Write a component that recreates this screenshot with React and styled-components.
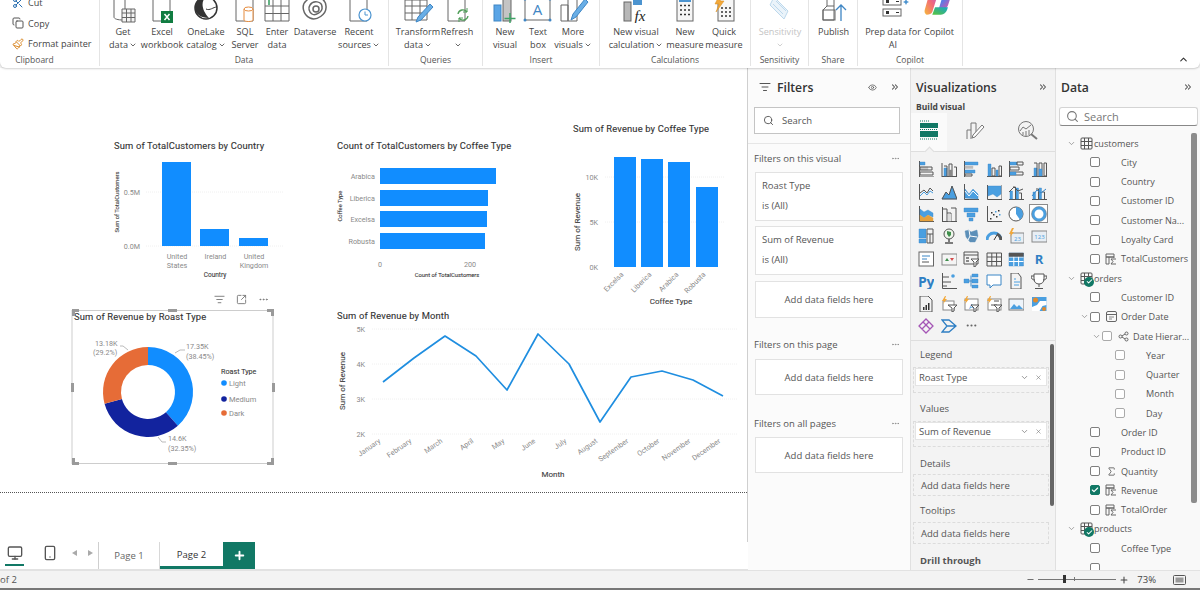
import React from "react";
import styled, { createGlobalStyle } from "styled-components";
import { Scissors, Copy, Paintbrush, Search, ChevronDown, ChevronsRight, ChevronUp, X, Monitor, Smartphone, Plus, Minus, Eye, Sigma, ListFilter, Ellipsis, SquareArrowOutUpRight, Check } from "lucide-react";

const FONT = '"Open Sans", "Noto Sans", sans-serif';
const CHART = 'Roboto, "Liberation Sans", sans-serif';
const GREEN = "#117865";
const BLUE = "#118DFF";

const Global = createGlobalStyle`
  html, body { margin: 0; padding: 0; background: #fff; }
  body { font-family: ${FONT}; color: #444; }
`;
const Root = styled.div`
  width: 1200px; height: 590px; display: flex; flex-direction: column; overflow: hidden; background: #f3f3f3;
`;

/* ---------- Ribbon ---------- */
const RibbonBar = styled.header`
  height: 68px; flex: none; display: flex; background: #fff; overflow: hidden;
  border-radius: 0 0 6px 6px; box-shadow: 0 1px 2px rgba(0,0,0,.18); position: relative; z-index: 2;
`;
const Group = styled.section`
  width: ${p => p.$w}px; flex: none; box-sizing: border-box; height: 66px;
  display: flex; flex-direction: column; border-right: 1px solid #e4e4e4;
`;
const GroupRow = styled.div`
  height: 54px; display: flex; padding-left: ${p => p.$pad || 0}px;
`;
const GroupLabel = styled.div`
  font-size: 8.5px; line-height: 12px; text-align: center; color: #555; padding-right: ${p => p.$shift || 0}px;
`;
const RButton = styled.div`
  width: ${p => p.$w}px; flex: none; display: flex; flex-direction: column; align-items: center;
`;
const RIcon = styled.div`
  height: 23px; width: 32px; display: flex; align-items: flex-end; justify-content: center;
  svg { flex: none; }
`;
const RLabel = styled.div`
  font-size: 9.1px; line-height: 13px; padding-top: 1.5px; text-align: center; white-space: nowrap;
  color: ${p => (p.$off ? "#c4c4c4" : "#444")};
`;
const Caret = styled(ChevronDown)`
  width: 8px; height: 8px; margin-left: 1px; vertical-align: -1px; stroke-width: 2.4;
`;
const ClipRows = styled.div`
  display: flex; flex-direction: column; padding-left: 12px; margin-top: -4px; gap: 7px;
`;
const ClipRow = styled.div`
  display: flex; align-items: center; gap: 4px; font-size: 9.1px; line-height: 13px; height: 13.5px; color: #444; white-space: nowrap;
  svg { width: 12px; height: 12px; color: #555; flex: none; }
`;
const Collapse = styled.div`
  margin-left: auto; align-self: flex-end; padding: 0 11px 3px 0; color: #333; line-height: 0;
`;

const S = "#666";
const Doc = () => <path d="M7 -2h11l6 7v25H7z" fill="#fff" stroke={S} />;
const I = {
  get: <><path d="M7 4v22c0 2 4 3 9 3h2V4" fill="#fff" stroke={S} /><ellipse cx="13" cy="4" rx="6" ry="3" fill="#fff" stroke={S} /><path d="M15 18h13v13H15zM15 22h13M15 26.500h13M19.500 18v13M24 18v13" fill="#f3f3f3" stroke={S} /></>,
  excel: <><Doc /><rect x="15" y="20" width="12" height="12" fill="#107c41" /><path d="M18.500 23l5 6M23.500 23l-5 6" stroke="#fff" strokeWidth="1.500" /></>,
  lake: <><circle cx="16" cy="17" r="11" fill="#fff" stroke="#333" strokeWidth="1.500" /><path d="M5 17c0-6 5-11 11-11-5 4-5 12 3 21-8 0-14-4-14-10z" fill="#333" /><path d="M16 18c4 2 7-2 11-2" stroke="#333" fill="none" /></>,
  sql: <><Doc /><path d="M15 18v11c0 2 9 2 9 0V18" fill="#fff" stroke="#e58a3c" /><ellipse cx="19.500" cy="18" rx="4.500" ry="2" fill="#fff" stroke="#e58a3c" /></>,
  enter: <><path d="M4 7h24v23H4zM4 15h24M4 22.500h24M12 7v23M20 7v23" fill="#fff" stroke={S} /><path d="M8 2v12M2 8h12" stroke="#3fa266" strokeWidth="1.600" /></>,
  dv: <><path d="M7 10c6-7 19-5 20 5 1 9-10 15-16 12C4 24 2 14 7 10z" fill="none" stroke={S} strokeWidth="1.500" /><path d="M11 14c3-5 12-4 12 2 1 5-7 9-10 7-3-2-4-6-2-9z" fill="none" stroke={S} strokeWidth="1.500" /><circle cx="17" cy="18" r="3" fill="none" stroke={S} strokeWidth="1.500" /></>,
  recent: <><Doc /><circle cx="22" cy="24" r="6" fill="#fff" stroke="#4c94d0" strokeWidth="1.200" /><path d="M22 20.500V24h3" fill="none" stroke="#4c94d0" /></>,
  transform: <><path d="M3 9h22v20H3zM3 15h22M3 22h22M10 9v20M18 9v20" fill="#fff" stroke={S} /><path d="M28 13l3 3-12 13-5 2 2-5z" fill="#69aee6" stroke="#3f86c4" /></>,
  refresh: <><Doc /><path d="M17 23a5 5 0 0 1 9-2M27 25a5 5 0 0 1-9 2" fill="none" stroke="#4f9e58" strokeWidth="1.300" /><path d="M26 17v4h-4M18 31v-4h4" fill="none" stroke="#4f9e58" /></>,
  newv: <><rect x="5" y="14" width="7" height="16" fill="#5aa5e6" stroke="#3f86c4" /><rect x="14" y="2" width="8" height="28" fill="#c4c4c4" stroke={S} /><path d="M21 22v11M15.500 27.500h11" stroke="#3fa266" strokeWidth="1.500" /></>,
  textb: <><rect x="3" y="8" width="25" height="21" fill="#fff" stroke={S} /><circle cx="3" cy="8" r="1.500" fill="#3f86c4" /><circle cx="28" cy="8" r="1.500" fill="#3f86c4" /><circle cx="3" cy="29" r="1.500" fill="#3f86c4" /><circle cx="28" cy="29" r="1.500" fill="#3f86c4" /><text x="15.500" y="24" textAnchor="middle" fontSize="15" fontFamily={FONT} fill="#3f86c4">A</text></>,
  more: <><path d="M4 14h7v16H4zM11 6h9v24h-9z" fill="#fff" stroke={S} /><path d="M28 8l3 3-12 15-5 3 2-6z" fill="#69aee6" stroke="#3f86c4" /></>,
  calc: <><rect x="4" y="11" width="7" height="19" fill="#b8b8b8" stroke={S} /><rect x="13" y="2" width="9" height="12" fill="#4c94d0" /><text x="20" y="30" textAnchor="middle" fontSize="15" fontStyle="italic" fontFamily="Liberation Serif, serif" fill="#222">fx</text></>,
  measure: <><rect x="8" y="3" width="16" height="27" fill="#f6f6f6" stroke={S} /><rect x="10" y="5" width="12" height="6" fill="#4c94d0" /><path d="M11 14.500h2M15 14.500h2M19 14.500h2M11 19h2M15 19h2M19 19h2M11 23.500h2M15 23.500h2M19 23.500h2" stroke="#333" strokeWidth="1.600" /></>,
  quick: <><rect x="10" y="8" width="16" height="22" fill="#f6f6f6" stroke={S} /><path d="M13 17h2M17 17h2M21 17h2M13 21h2M17 21h2M21 21h2M13 25h2M17 25h2M21 25h2" stroke="#333" strokeWidth="1.600" /><path d="M13 1l-6 12h4l-3 8 8-11h-4l4-8z" fill="#f2a83a" stroke="#d88a16" strokeWidth=".5" /></>,
  sens: <><path d="M10 6l14 14-4 8L6 14z" fill="#eaf3fa" stroke="#bcd8ec" /><path d="M12 10l10 10M9 13l10 10" stroke="#bcd8ec" /></>,
  publish: <><path d="M5 19l4-4h7v14H5zM9 15V4h7v11" fill="#fff" stroke={S} /><rect x="5" y="19" width="12" height="10" fill="none" stroke={S} /><path d="M23 30V14M18 19l5-5 5 5" fill="none" stroke="#3f86c4" strokeWidth="1.300" /></>,
  prep: <g transform="translate(2 -3)"><rect x="4" y="10" width="18" height="7" fill="#fff" stroke={S} /><rect x="4" y="21" width="18" height="7" fill="#fff" stroke={S} /><rect x="7" y="12" width="3" height="3" fill="#333" /><rect x="7" y="23" width="3" height="3" fill="#333" /><path d="M17 13.500h3M17 24.500h3" stroke="#333" /><path d="M23 3l1.500 3 3 1.500-3 1.500-1.500 3-1.500-3-3-1.500 3-1.500z" fill="none" stroke="#4c94d0" /><path d="M27 11l1 2 2 1-2 1-1 2-1-2-2-1 2-1z" fill="#4c94d0" /></g>,
  copilot: <g transform="translate(1 -3) scale(.92)"><defs><linearGradient id="cpA" x1="0" y1="0" x2="1" y2="1"><stop offset="0" stopColor="#2b8cf0" /><stop offset=".55" stopColor="#5a7ae6" /><stop offset="1" stopColor="#f04f9a" /></linearGradient><linearGradient id="cpB" x1="0" y1="1" x2="1" y2="0"><stop offset="0" stopColor="#f6b83a" /><stop offset=".5" stopColor="#f2697a" /><stop offset="1" stopColor="#b45ae0" /></linearGradient><linearGradient id="cpC" x1="0" y1="1" x2="1" y2="0"><stop offset="0" stopColor="#5ac43c" /><stop offset="1" stopColor="#16a6c8" /></linearGradient></defs><path d="M10 2h14c4 0 6 4 5 8l-3 9c-1 3-4 4-7 4h-3l5-17c1-2-1-4-4-4z" fill="url(#cpA)" /><path d="M5 9c1-3 3-5 6-5h5L9 26c-1 2-3 3-6 3-2-1-3-3-2-6z" fill="url(#cpB)" /><path d="M9 29l3-8h14c-1 4-3 8-8 8z" fill="url(#cpC)" /></g>,
};
const RI = ({ n }) => <svg width="32" height="32" viewBox="0 0 32 32" fill="none" strokeWidth="1">{I[n]}</svg>;

const RB = ({ w, n, off, l1, l2, c }) => (
  <RButton $w={w}>
    <RIcon><RI n={n} /></RIcon>
    <RLabel $off={off}>{l1}{c === 1 && <Caret />}<br />{l2}{c === 2 && <Caret />}</RLabel>
  </RButton>
);

const Ribbon = () => (
  <RibbonBar>
    <Group $w={100}>
      <GroupRow>
        <ClipRows>
          <ClipRow><Scissors style={{ color: "#2a6fb0" }} />Cut</ClipRow>
          <ClipRow><Copy />Copy</ClipRow>
          <ClipRow><Paintbrush style={{ color: "#d98a2b" }} />Format painter</ClipRow>
        </ClipRows>
      </GroupRow>
      <GroupLabel $shift={30}>Clipboard</GroupLabel>
    </Group>
    <Group $w={289}>
      <GroupRow $pad={4}>
        <RB w={38} n="get" l1="Get" l2="data" c={2} />
        <RB w={40} n="excel" l1="Excel" l2="workbook" />
        <RB w={48} n="lake" l1="OneLake" l2="catalog" c={2} />
        <RB w={30} n="sql" l1="SQL" l2="Server" />
        <RB w={34} n="enter" l1="Enter" l2="data" />
        <RB w={42} n="dv" l1="Dataverse" l2="" />
        <RB w={46} n="recent" l1="Recent" l2="sources" c={2} />
      </GroupRow>
      <GroupLabel>Data</GroupLabel>
    </Group>
    <Group $w={94}>
      <GroupRow $pad={4}>
        <RB w={50} n="transform" l1="Transform" l2="data" c={2} />
        <RB w={28} n="refresh" l1="Refresh" l2="" c={2} />
      </GroupRow>
      <GroupLabel>Queries</GroupLabel>
    </Group>
    <Group $w={117}>
      <GroupRow $pad={5}>
        <RB w={34} n="newv" l1="New" l2="visual" />
        <RB w={32} n="textb" l1="Text" l2="box" />
        <RB w={38} n="more" l1="More" l2="visuals" c={2} />
      </GroupRow>
      <GroupLabel>Insert</GroupLabel>
    </Group>
    <Group $w={151}>
      <GroupRow $pad={4}>
        <RB w={64} n="calc" l1="New visual" l2="calculation" c={2} />
        <RB w={34} n="measure" l1="New" l2="measure" />
        <RB w={44} n="quick" l1="Quick" l2="measure" />
      </GroupRow>
      <GroupLabel>Calculations</GroupLabel>
    </Group>
    <Group $w={58}>
      <GroupRow $pad={0}>
        <RB w={58} n="sens" off l1="Sensitivity" l2="" c={2} />
      </GroupRow>
      <GroupLabel>Sensitivity</GroupLabel>
    </Group>
    <Group $w={49}>
      <GroupRow>
        <RB w={49} n="publish" l1="Publish" l2="" />
      </GroupRow>
      <GroupLabel>Share</GroupLabel>
    </Group>
    <Group $w={105}>
      <GroupRow $pad={5}>
        <RB w={60} n="prep" l1="Prep data for" l2="AI" />
        <RB w={32} n="copilot" l1="Copilot" l2="" />
      </GroupRow>
      <GroupLabel>Copilot</GroupLabel>
    </Group>
    <Collapse><ChevronUp size={11} strokeWidth={2.4} /></Collapse>
  </RibbonBar>
);

/* ---------- Canvas + charts ---------- */
const Body = styled.main`
  flex: 1; min-height: 0; display: flex;
`;
const CanvasCol = styled.div`
  width: 748px; flex: none; display: flex; flex-direction: column; background: #fff;
`;
const CanvasArea = styled.div`
  flex: 1; border-right: 1px solid #cfcfcf; min-height: 0;
`;
const Page = styled.div`
  height: 424px; position: relative; border-bottom: 1px dotted #555;
`;
const Visual = styled.svg`
  position: absolute; left: ${p => p.$x}px; top: ${p => p.$y - 68}px; overflow: visible;
`;
const Title = styled.text`
  font-family: ${CHART}; font-size: 9.4px; font-weight: 400; fill: #333; letter-spacing: .15px; stroke: #333; stroke-width: .12px;
`;
const Tick = styled.text`
  font-family: ${CHART}; font-size: 7.2px; fill: #8a8a8a; font-weight: 400;
`;
const AxisName = styled.text`
  font-family: ${CHART}; font-size: ${p => p.$s || 7}px; fill: #3c3c3c; font-weight: 400; stroke: #3c3c3c; stroke-width: .1px;
`;
const Grid = styled.line`
  stroke: #f0f0f0; stroke-width: 1; stroke-dasharray: 1 1;
`;
const Chart = ({ x, y, w, h, children }) => (
  <Visual $x={x} $y={y} width={w} height={h} viewBox={`${x} ${y} ${w} ${h}`}>{children}</Visual>
);

const CountryChart = () => (
  <Chart x={100} y={135} w={200} h={150}>
    <Title x={114} y={149}>Sum of TotalCustomers by Country</Title>
    <AxisName $s={5.8} transform="translate(119 202) rotate(-90)" textAnchor="middle">Sum of TotalCustomers</AxisName>
    <Grid x1={146} x2={283} y1={192} y2={192} /><Grid x1={146} x2={283} y1={246} y2={246} />
    <Tick x={140} y={194.500} textAnchor="end">0.5M</Tick>
    <Tick x={140} y={248.500} textAnchor="end">0.0M</Tick>
    <rect x={162} y={162} width={29} height={84} fill={BLUE} />
    <rect x={200} y={229} width={29} height={17} fill={BLUE} />
    <rect x={239} y={238} width={29} height={8} fill={BLUE} />
    <Tick x={177} y={259} textAnchor="middle">United</Tick><Tick x={177} y={268} textAnchor="middle">States</Tick>
    <Tick x={215.500} y={259} textAnchor="middle">Ireland</Tick>
    <Tick x={254} y={259} textAnchor="middle">United</Tick><Tick x={254} y={268} textAnchor="middle">Kingdom</Tick>
    <AxisName $s={6.5} x={215} y={277} textAnchor="middle">Country</AxisName>
  </Chart>
);

const TypeBarChart = () => (
  <Chart x={330} y={135} w={190} h={150}>
    <Title x={337} y={149}>Count of TotalCustomers by Coffee Type</Title>
    <AxisName $s={5.8} transform="translate(342 206) rotate(-90)" textAnchor="middle">Coffee Type</AxisName>
    {[["Arabica", 168, 116], ["Liberica", 190, 108], ["Excelsa", 211, 107], ["Robusta", 233, 105]].map(([n, y, w]) => (
      <g key={n}>
        <Tick x={375} y={y + 10.500} textAnchor="end">{n}</Tick>
        <rect x={380} y={y} width={w} height={16} fill={BLUE} />
      </g>
    ))}
    <Tick x={380} y={267} textAnchor="middle">0</Tick>
    <Tick x={470} y={267} textAnchor="middle">200</Tick>
    <AxisName $s={5.8} x={447} y={277} textAnchor="middle">Count of TotalCustomers</AxisName>
  </Chart>
);

const TypeColChart = () => (
  <Chart x={565} y={120} w={170} h={190}>
    <Title x={573} y={132}>Sum of Revenue by Coffee Type</Title>
    <AxisName $s={8} transform="translate(580 222) rotate(-90)" textAnchor="middle">Sum of Revenue</AxisName>
    <Grid x1={605} x2={725} y1={177} y2={177} /><Grid x1={605} x2={725} y1={222} y2={222} />
    <Tick x={598} y={180} textAnchor="end">10K</Tick>
    <Tick x={598} y={225} textAnchor="end">5K</Tick>
    <Tick x={598} y={270} textAnchor="end">0K</Tick>
    {[["Excelsa", 614, 157, 624], ["Liberica", 641, 159, 652], ["Arabica", 668, 162, 679], ["Robusta", 696, 187, 706]].map(([n, x, t, l]) => (
      <g key={n}>
        <rect x={x} y={t} width={22} height={267 - t} fill={BLUE} />
        <Tick transform={`translate(${l} 275) rotate(-45)`} textAnchor="end">{n}</Tick>
      </g>
    ))}
    <AxisName $s={8} x={671} y={304} textAnchor="middle">Coffee Type</AxisName>
  </Chart>
);

const polar = (cx, cy, r, f) => {
  const a = f * 2 * Math.PI - Math.PI / 2;
  return [cx + r * Math.cos(a), cy + r * Math.sin(a)];
};
const arc = (cx, cy, R, r, f0, f1) => {
  const [a, b] = polar(cx, cy, R, f0), [c, d] = polar(cx, cy, R, f1), [e, g] = polar(cx, cy, r, f1), [h, i] = polar(cx, cy, r, f0);
  const large = f1 - f0 > 0.5 ? 1 : 0;
  return `M${a} ${b}A${R} ${R} 0 ${large} 1 ${c} ${d}L${e} ${g}A${r} ${r} 0 ${large} 0 ${h} ${i}Z`;
};
const Handle = styled.rect`
  fill: #9a9a9a;
`;
const RoastChart = () => (
  <Chart x={68} y={306} w={212} h={162}>
    <rect x={72} y={310.500} width={201} height={153} fill="#fff" stroke="#cdcdcd" />
    <Title x={74} y={320}>Sum of Revenue by Roast Type</Title>
    <path d={arc(148, 392, 45, 27, 0, 0.3845)} fill={BLUE} />
    <path d={arc(148, 392, 45, 27, 0.3845, 0.708)} fill="#12239E" />
    <path d={arc(148, 392, 45, 27, 0.708, 1)} fill="#E66C37" />
    <path d="M175 353l5-3h5M158 437l4 5h4M128 350l-5-4h-3" fill="none" stroke="#bbb" />
    <Tick x={186} y={349}>17.35K</Tick><Tick x={186} y={358.500}>(38.45%)</Tick>
    <Tick x={168} y={441}>14.6K</Tick><Tick x={168} y={450.500}>(32.35%)</Tick>
    <Tick x={95} y={345.500}>13.18K</Tick><Tick x={93} y={355}>(29.2%)</Tick>
    <AxisName $s={7.2} x={221} y={374}>Roast Type</AxisName>
    {[["Light", BLUE, 383], ["Medium", "#12239E", 399], ["Dark", "#E66C37", 413]].map(([n, c, y]) => (
      <g key={n}>
        <circle cx={224} cy={y} r={2.800} fill={c} />
        <Tick x={229} y={y + 2.500} style={{ fontSize: 7.500 }}>{n}</Tick>
      </g>
    ))}
    <Handle x={72} y={309} width={7} height={3} /><Handle x={72} y={309} width={3} height={7} />
    <Handle x={267} y={309} width={7} height={3} /><Handle x={271} y={309} width={3} height={7} />
    <Handle x={72} y={462} width={7} height={3} /><Handle x={72} y={458} width={3} height={7} />
    <Handle x={267} y={462} width={7} height={3} /><Handle x={271} y={458} width={3} height={7} />
    <Handle x={168} y={309} width={9} height={3} /><Handle x={168} y={462} width={9} height={3} />
    <Handle x={71} y={383} width={3} height={9} /><Handle x={272} y={383} width={3} height={9} />
  </Chart>
);

const MONTHS = [["January", 383, 382], ["February", 414, 358], ["March", 445, 336], ["April", 476, 356], ["May", 507, 390], ["June", 538, 334], ["July", 569, 364], ["August", 600, 422], ["September", 631, 377], ["October", 662, 371], ["November", 693, 380], ["December", 723, 396]];
const LineChart = () => (
  <Chart x={330} y={306} w={415} h={180}>
    <Title x={337} y={319}>Sum of Revenue by Month</Title>
    <AxisName $s={8} transform="translate(345 381) rotate(-90)" textAnchor="middle">Sum of Revenue</AxisName>
    {[["5K", 329], ["4K", 364], ["3K", 399], ["2K", 434]].map(([t, y]) => (
      <g key={t}>
        <Grid x1={372} x2={737} y1={y} y2={y} />
        <Tick x={365} y={y + 2.500} textAnchor="end">{t}</Tick>
      </g>
    ))}
    <polyline points={MONTHS.map(m => `${m[1]},${m[2]}`).join(" ")} fill="none" stroke="#1f8ee0" strokeWidth="1.700" strokeLinejoin="round" />
    {MONTHS.map(([n, x]) => (
      <Tick key={n} transform={`translate(${x - 2} 442) rotate(-35)`} textAnchor="end">{n}</Tick>
    ))}
    <AxisName $s={8} x={553} y={477} textAnchor="middle">Month</AxisName>
  </Chart>
);

const VisualTools = styled.div`
  position: absolute; left: 214px; top: ${294 - 68}px; display: flex; gap: 11px; color: #777; align-items: center;
`;

/* ---------- Tabs ---------- */
const TabBar = styled.nav`
  height: 28px; flex: none; display: flex; align-items: stretch; border-bottom: 1px solid #e2e2e2; box-sizing: border-box; background: #fff;
`;
const ViewBtn = styled.div`
  width: ${p => p.$w}px; display: flex; justify-content: center; align-items: center; color: #555; position: relative;
  box-sizing: border-box; padding-bottom: 5px;
  ${p => p.$on && `&::after { content: ""; position: absolute; left: 5px; right: 5px; bottom: 3px; height: 2px; background: ${GREEN}; }`}
`;
const Arrows = styled.div`
  width: 28px; display: flex; align-items: center; justify-content: space-between; padding: 0 5px 5px 1px; box-sizing: border-box; border-right: 1px solid #cfcfcf;
`;
const Tri = styled.span`
  width: 0; height: 0; border: 3.500px solid transparent;
  ${p => (p.$left ? "border-right: 5px solid #aaa; border-left-width: 0;" : "border-left: 5px solid #aaa; border-right-width: 0;")}
`;
const PageTab = styled.div`
  width: ${p => p.$w}px; display: flex; align-items: center; justify-content: center; font-size: 9.5px; box-sizing: border-box;
  color: ${p => (p.$on ? "#333" : "#666")};
  border-right: ${p => (p.$on ? "0" : "1px solid #d8d8d8")};
  border-bottom: ${p => (p.$on ? `3px solid ${GREEN}` : "0")};
`;
const AddTab = styled.div`
  width: 32px; background: ${GREEN}; color: #fff; display: flex; align-items: center; justify-content: center;
`;

/* ---------- Panels ---------- */
const PanelHead = styled.div`
  height: 38px; display: flex; align-items: center; justify-content: space-between; padding: 0 ${p => p.$r || 8}px 0 ${p => p.$l || 6}px;
  svg { color: #555; }
`;
const PanelTitle = styled.h2`
  margin: 0; font-size: 12.200px; font-weight: 600; color: #333; display: flex; align-items: center; gap: 6px;
`;
const HeadIcons = styled.div`
  display: flex; align-items: center; gap: 13px;
`;
const FiltersPanel = styled.aside`
  width: 162px; flex: none; background: #fbfbfb; box-sizing: border-box; padding: 0 0 0 6px; overflow: hidden;
`;
const FilterSearch = styled.div`
  width: 146px; height: 27px; box-sizing: border-box; margin-top: 1px; background: #fff; border: 1px solid #c4c4c4;
  display: flex; align-items: center; gap: 8px; padding-left: 8px; font-size: 9.500px; color: #555;
`;
const Divider = styled.div`
  height: 1px; background: #e6e6e6; margin: 9px 0 0 -6px; width: 162px;
`;
const FilterSection = styled.div`
  display: flex; justify-content: space-between; align-items: center; height: 14px; font-size: 9.500px; color: #555; margin-top: ${p => p.$mt}px; padding-right: 10px;
  svg { color: #888; }
`;
const FilterCard = styled.div`
  width: 148px; margin: ${p => p.$mt}px 0 0 1px; box-sizing: border-box; background: #fff; border: 1px solid #e2e2e2;
  height: 49px; padding: 3px 0 0 6px; font-size: 9.500px; color: #555; line-height: 20px;
`;
const AddCard = styled.div`
  width: 148px; height: ${p => p.$h}px; margin: ${p => p.$mt}px 0 0 1px; box-sizing: border-box; background: #fff; border: 1px solid #e2e2e2;
  display: flex; align-items: center; justify-content: center; font-size: 9.500px; color: #555;
`;
const VizPanel = styled.aside`
  width: 145px; flex: none; box-sizing: border-box; background: #f3f3f3; border-left: 1px solid #e0e0e0; position: relative; overflow: hidden;
`;
const BuildLabel = styled.div`
  font-size: 8.500px; font-weight: 700; color: #444; margin: -5px 0 0 5px; line-height: 12px;
`;
const VizTabs = styled.div`
  height: 39px; display: grid; grid-template-columns: 36px 54px 54px; border-bottom: 1px solid #dedede; align-items: stretch; justify-items: stretch; box-sizing: border-box;
`;
const VizTab = styled.div`
  position: relative; display: flex; align-items: center; justify-content: center; padding-bottom: 4px;
  ${p => p.$on && `
    background: #fafafa;
    &::after {
      content: ""; position: absolute; left: 50%; bottom: -4px; width: 6px; height: 6px; margin-left: -3px;
      background: #f3f3f3; border-left: 1px solid #dedede; border-top: 1px solid #dedede; transform: rotate(45deg);
    }
  `}
`;
const VizGrid = styled.div`
  display: grid; grid-template-columns: repeat(6, 22.500px); grid-auto-rows: 22.400px; padding: 6px 0 0 4px; align-items: center; justify-items: center; height: 188px; box-sizing: border-box;
`;
const VizCell = styled.div`
  width: 19px; height: 19px; display: flex; align-items: center; justify-content: center; box-sizing: border-box;
  ${p => p.$on && "border: 1px solid #8a8a8a; background: #fff;"}
`;
const WellsBox = styled.div`
  border-top: 1px solid #dedede; padding: 0 0 0 2px;
`;
const WellLabel = styled.div`
  font-size: 9.500px; line-height: 14px; color: #555; margin: ${p => p.$mt}px 0 0 7px;
  font-weight: ${p => (p.$bold ? 700 : 400)};
`;
const Well = styled.div`
  width: 136px; height: ${p => p.$h}px; box-sizing: border-box; border: 1px dashed #dcdcdc; margin-top: ${p => p.$mt}px; padding: 0 1px;
  font-size: 9.500px; color: #555; display: flex; flex-direction: column; justify-content: ${p => (p.$add ? "center" : "flex-start")};
  ${p => p.$add && "padding-left: 7px;"}
`;
const Field = styled.div`
  height: 18px; background: #fff; border: 1px solid #e4e4e4; box-sizing: border-box; display: flex; align-items: center; padding: 0 4px 0 3px; color: #555;
  svg { color: #777; flex: none; }
  span { flex: 1; }
`;
const ScrollBar = styled.div`
  position: absolute; width: ${p => p.$w}px; left: ${p => p.$l}px; top: ${p => p.$t - 68}px; height: ${p => p.$h}px; background: ${p => p.$c}; border-radius: 2px;
`;
const DataPanel = styled.aside`
  width: 145px; flex: none; box-sizing: border-box; background: #f9f9f9; border-left: 1px solid #e0e0e0; position: relative; overflow: hidden;
`;
const DataSearch = styled.div`
  width: 139px; height: 19px; box-sizing: border-box; margin: 1px 0 7.400px 3px; background: #fff; border: 1px solid #d4d4d4; border-bottom: 1px solid #888; border-radius: 3px;
  display: flex; align-items: center; gap: 5px; padding-left: 6px; font-size: 11px; color: #777;
`;
const TreeRow = styled.div`
  height: 19.300px; display: flex; align-items: center; padding-left: ${p => p.$indent}px; font-size: 9.100px; color: #555; white-space: nowrap;
`;
const Chev = styled.span`
  width: 12px; flex: none; display: flex; justify-content: center; color: #888;
`;
const Box = styled.span`
  width: 10px; height: 10px; flex: none; box-sizing: border-box; border-radius: 2px; display: flex; align-items: center; justify-content: center; color: #fff;
  border: 1px solid ${p => (p.$on ? GREEN : p.$light ? "#aaa" : "#7f7f7f")}; background: ${p => (p.$on ? GREEN : "#fff")};
`;
const FieldIconSlot = styled.span`
  width: 16px; margin-left: 3px; margin-right: 2px; flex: none; display: flex; justify-content: center; color: #666;
`;
const TableSlot = styled.span`
  width: 14px; margin: 0 1px 0 2px; flex: none; position: relative; display: flex; justify-content: center;
`;
const Badge = styled.span`
  position: absolute; left: 5px; top: 5px; width: 10px; height: 10px; border-radius: 50%; background: ${GREEN}; color: #fff; display: flex; align-items: center; justify-content: center;
`;
const Status = styled.footer`
  height: 20px; flex: none; box-sizing: border-box; background: #f3f3f3; border-bottom: 2px solid #777; border-top: 1px solid #e2e2e2;
  display: flex; align-items: center; justify-content: space-between; font-size: 9.500px; color: #555; position: relative; z-index: 3;
`;
const ZoomTools = styled.div`
  display: flex; align-items: center; color: #444; padding-right: 14px;
`;
const ZoomValue = styled.span`
  margin: 0 17px 0 8px;
`;
const Slider = styled.div`
  width: 78px; height: 1px; background: #777; margin: 0 3px 0 3px; position: relative;
`;
const Thumb = styled.span`
  position: absolute; left: ${p => p.$l}px; top: ${p => -p.$h / 2}px; width: ${p => p.$w}px; height: ${p => p.$h}px; background: ${p => p.$c};
`;

const V = "#4a9fe0", Dk = "#555";
const P = ({ d, c = Dk, w = 1 }) => <path d={d} fill="none" stroke={c} strokeWidth={w} />;
const F = ({ d, c = V }) => <path d={d} fill={c} stroke={c === V ? "#3b86c6" : c} strokeWidth=".4" />;
const vizIcons = [
  <><P d="M1.500 0v16h15" /><F d="M2 1h5v3H2z" /><F d="M2 6h8v3H2z" c="#c6c6c6" /><P d="M2 6h12v3H2zM2 11h13v3H2z" /></>,
  <><P d="M1 15.500h15M1 2v14" /><F d="M3 7h3v8H3z" /><P d="M3 5h3v10M8 3h3v12H8zM13 6h2.500v9" /><F d="M8 9h3v6H8z" c="#888" /></>,
  <><P d="M1.500 0v16" /><F d="M2 1h13v3H2z" /><F d="M2 5h8v2.500H2z" c="#bbb" /><F d="M2 9h10v3H2z" /><P d="M2 13h7v2H2z" /></>,
  <><P d="M1 15.500h15" /><F d="M2 3h3v12H2z" /><P d="M6 7h3v8H6z" /><F d="M10 9h2v6h-2z" /><P d="M13 5h2.500v10H13z" /></>,
  <><P d="M1.500 0v16" /><F d="M2 1h7v3H2z" /><P d="M9 1h6v3H9zM2 6h9v3H2zM2 11h13v3H2z" /><F d="M2 11h6v3H2z" /></>,
  <><P d="M1 15.500h15" /><F d="M3 7h3v8H3z" /><P d="M3 2h3v13M8 2h3v13H8zM13 2h2.500v13H13z" /><F d="M8 8h3v7H8z" /></>,
  <><P d="M1.500 0v15.500H16" /><P d="M2 12l4-4 3 3 3-4 3 2" c="#4a9fe0" /><P d="M2 9l4-3 3 3 3-5 3 3" /></>,
  <><F d="M1 15l4-7 3 3 3-9 5 13z" /><P d="M1 15l4-7 3 3 3-9 5 13z" /></>,
  <><P d="M1.500 0v15.500H16" /><F d="M2 14V5l4 5 4-5 5 5v5z" /><P d="M2 7l4 5 4-5 5 5" c="#fff" /></>,
  <><P d="M1.500 1v14.500H16M16 1v14" /><F d="M2 2h13v8l-4 3-4-3-5 2z" /></>,
  <><P d="M1 15.500h15" /><F d="M2 7h2.500v8H2zM8 4h2.500v11H8z" /><P d="M5 3h2.500v12M11 9h2.500v6" /><P d="M1 8l5-5 4 4 5-2" /></>,
  <><P d="M1 15.500h15" /><F d="M2 8h2.500v7H2zM8 4h2.500v11H8z" /><P d="M5 5h2.500v10M11 8h2.500v7" /><P d="M1 12l5-6 4 3 5-4" c="#3b86c6" /></>,
  <><P d="M1.500 0v15.500H16" /><F d="M2 3l4 3 4-2 5 3v4l-5-2-4 3-4-3z" /><F d="M2 9l4 3 4-3 5 3v3H2z" c="#e6a13c" /></>,
  <><P d="M1 15.500h15M1.500 1v15" /><P d="M2 3h4v12M6 7h4v8M10 2h5v13" /><F d="M7 8h3v7H7z" c="#ddd" /></>,
  <><F d="M1 2h14v4H1z" /><F d="M4 7h8v4H4z" /><F d="M6 12h4v3H6z" /></>,
  <><P d="M1.500 0v15.500H16" /><path d="M4 12h1.500v1.500H4zM7 8h1.500v1.500H7zM10 10h1.500v1.500H10zM12 4h1.500v1.500H12zM5 6h1.500v1.500H5z" fill="#333" /><path d="M9 5h1.500v1.500H9zM13 8h1.500v1.500H13z" fill={V} /></>,
  <><circle cx="8" cy="8" r="7" fill="#fff" stroke={Dk} /><path d="M8 1a7 7 0 0 1 7 7H8z" fill={V} /><path d="M8 8h7a7 7 0 0 1-3 5.700z" fill={V} /></>,
  <><circle cx="8" cy="8" r="6" fill="none" stroke={V} strokeWidth="3" /><circle cx="8" cy="8" r="7.500" fill="none" stroke="#777" strokeWidth=".5" /></>,
  <><F d="M1 1h7v9H1z" /><F d="M1 11h7v4H1z" /><P d="M9 1h6v14H9zM9 6h6M12 6v9" /></>,
  <><circle cx="8" cy="6" r="5" fill="#eef5ea" stroke="#555" /><path d="M6 3l4 1 0 3-2 2-2-3z" fill="#3f8f4c" /><P d="M8 11v3M4 15h8" w="1.500" /></>,
  <><F d="M2 3l4-1 2 2 6-2 1 6-3 6-5 0-4-5z" c="#5c8fb8" /><P d="M6 2l1 6 7 1M7 8l-2 4" c="#fff" /></>,
  <><path d="M1 12a7 7 0 0 1 14 0" fill="none" stroke={V} strokeWidth="3" /><path d="M8 12l3-5" stroke="#333" /><path d="M11 6a7 7 0 0 1 4 6" fill="none" stroke={Dk} strokeWidth="3" /></>,
  <><rect x="3" y="5" width="13" height="10" fill="#e8eef4" stroke="#888" /><text x="9.500" y="13" textAnchor="middle" fontSize="6" fontFamily={FONT} fill={V}>23</text><path d="M4 0L1 6h2L2 9l4-5H4l2-4z" fill="#f2a83a" /></>,
  <><rect x="1" y="3" width="15" height="11" fill="#e8eef4" stroke="#888" /><text x="8.500" y="11" textAnchor="middle" fontSize="6" fontFamily={FONT} fill={V}>123</text></>,
  <><rect x="1" y="1" width="14.500" height="14" fill="#fff" stroke="#666" /><P d="M4 5h8M4 8h5" c="#3b86c6" /><P d="M4 11h7" /></>,
  <><rect x="1" y="3" width="15" height="11" fill="#f4f4f4" stroke="#888" /><path d="M4 10l2-3 2 3z" fill="#3f8f4c" /><path d="M9 7h4l-2 3z" fill="#d34a4a" /></>,
  <><P d="M1 1h14v12H1V1zM1 4h14" /><path d="M3 6h3v2H3zM3 9h3v2H3z" fill="#888" /><path d="M8 8h8l-3 3v4l-2 1v-5z" fill="#fff" stroke="#555" /></>,
  <><P d="M1 2h14.500v13H1zM1 6h14.500M1 10.500h14.500M5.800 2v13M10.600 2v13" /></>,
  <><F d="M1 2h14.500v13H1z" /><P d="M1 6h14.500M1 10.500h14.500M5.800 2v13M10.600 2v13" c="#fff" /><F d="M1 2h14.500v3.500H1z" c="#555" /></>,
  <text x="8" y="13" textAnchor="middle" fontSize="13" fontWeight="700" fontFamily={FONT} fill="#2f7fc4">R</text>,
  <text x="8" y="13.500" textAnchor="middle" fontSize="14" fontWeight="700" letterSpacing="-.5" fontFamily={FONT} fill="#2f7fc4">Py</text>,
  <><P d="M1.500 0v15.500H16M2 4h6M2 9h8M2 13h4" /><circle cx="12" cy="3" r="1.800" fill={V} /></>,
  <><F d="M1 6h5v4H1z" /><F d="M9 1h6v3H9zM9 6h6v4H9zM9 12h6v3H9z" /><P d="M6 8h3M8 2.500v11" c="#3b86c6" /></>,
  <path d="M1 2h14v10H7l-3 3v-3H1z" fill="#fff" stroke="#3b86c6" />,
  <><P d="M3 0h7l3 4v12H3z" /><P d="M6 6h2M6 9h6M6 12h5" c={V} /></>,
  <><path d="M3 1h10v5c0 3-2 5-5 5S3 9 3 6z" fill="#fff" stroke={Dk} /><P d="M3 3H0c0 3 2 4 4 4M13 3h3c0 3-2 4-4 4M8 11v3M4 15.500h8" /></>,
  <><P d="M2 0h8l4 4v12H2z" /><path d="M5 11h1.500v3H5zM7.500 9H9v5H7.500zM10 7h1.500v7H10z" fill="#333" /></>,
  <><rect x="2" y="5" width="11" height="9" fill="#fff" stroke="#888" /><path d="M4 0L1 5h2L2 8l4-5H4l1-3z" fill="#f2a83a" /><path d="M7 9h9l-3 3v3l-2 1v-4z" fill="#fff" stroke="#555" /></>,
  <><rect x="2" y="3" width="13" height="11" fill="#fff" stroke="#888" /><path d="M4 0L1 5h2L2 8l4-5H4l1-3z" fill="#f2a83a" /><text x="6" y="13" fontSize="8" fontFamily={FONT} fill={V}>A</text><path d="M8 9h8l-3 3v3l-2 1v-4z" fill="#fff" stroke="#555" /></>,
  <><rect x="2" y="3" width="13" height="11" fill="#fff" stroke="#888" /><path d="M4 0L1 5h2L2 8l4-5H4l1-3z" fill="#f2a83a" /><P d="M8 5h5M5 9h6" /><path d="M8 9h8l-3 3v3l-2 1v-4z" fill="#fff" stroke="#555" /></>,
  <><rect x="1" y="3" width="15" height="11" fill="#eef4fa" stroke="#777" /><path d="M2 13l4-5 3 3 2-2 4 4z" fill={V} /></>,
  <><path d="M1 1h14.500v14H1z" fill={V} /><path d="M1 11l5-2 3-4h6.500v4l-4 1-3 5H1z" fill="#fff" /><circle cx="4.500" cy="4" r="2.500" fill="#e28a2b" /><circle cx="13" cy="13" r="2" fill="#e28a2b" /></>,
  <path d="M8 1l7 7-7 7-7-7zM1 8l4-4 7 7M15 8l-4-4-7 7" fill="none" stroke="#a455b5" strokeWidth="1.300" />,
  <path d="M1 2h7l7 6-7 6H1l5-6zM6 8h9" fill="none" stroke="#2f7fc4" strokeWidth="1.300" />,
  <Ellipsis size={13} color="#666" />,
];

const TableIcon = () => (
  <svg width="13" height="13" viewBox="0 0 13 13"><path d="M2 1h9a1 1 0 0 1 1 1v9a1 1 0 0 1-1 1H2a1 1 0 0 1-1-1V2a1 1 0 0 1 1-1zM1 4.500h11M1 8.500h11M4.500 1v11M8.500 1v11" fill="none" stroke="#555" /></svg>
);
const MeasureIcon = () => (
  <svg width="12" height="12" viewBox="0 0 12 12"><path d="M1 1h8v3H1zM1 4h3v7H1zM4 4h5v1" fill="none" stroke="#666" /><path d="M11 6H6l2 2.500L6 11h5" fill="#f9f9f9" stroke="#666" /></svg>
);
const CalIcon = () => (
  <svg width="11" height="11" viewBox="0 0 11 11"><rect x=".5" y=".5" width="10" height="10" rx="1.500" fill="none" stroke="#666" /><path d="M.5 3.500h10" stroke="#666" /><path d="M3 6h5M3 8h3" stroke="#888" /></svg>
);
const HierIcon = () => (
  <svg width="11" height="11" viewBox="0 0 11 11" fill="none" stroke="#666"><circle cx="2.500" cy="5.500" r="1.500" /><circle cx="8.500" cy="2.500" r="1.500" /><circle cx="8.500" cy="8.500" r="1.500" /><path d="M4 5l3-2M4 6l3 2" /></svg>
);
const FitIcon = () => (
  <svg width="13" height="10" viewBox="0 0 13 10" fill="none" stroke="#555"><rect x=".5" y=".5" width="12" height="9" rx="1" /><rect x="2.500" y="2.500" width="8" height="5" fill="#999" stroke="none" /></svg>
);

const row = (level, label, extra = {}) => ({ level, label, ...extra });
const TREE = [
  { table: true, label: "customers" },
  row(1, "City"), row(1, "Country"), row(1, "Customer ID"), row(1, "Customer Na..."), row(1, "Loyalty Card"),
  row(1, "TotalCustomers", { icon: <MeasureIcon /> }),
  { table: true, label: "orders", badge: true },
  row(1, "Customer ID"),
  row(1, "Order Date", { chev: true, icon: <CalIcon /> }),
  row(2, "Date Hierar...", { chev: true, icon: <HierIcon /> }),
  row(3, "Year"), row(3, "Quarter"), row(3, "Month"), row(3, "Day"),
  row(1, "Order ID"), row(1, "Product ID"),
  row(1, "Quantity", { icon: <Sigma size={11} /> }),
  row(1, "Revenue", { icon: <MeasureIcon />, on: true }),
  row(1, "TotalOrder", { icon: <MeasureIcon /> }),
  { table: true, label: "products", badge: true },
  row(1, "Coffee Type"),
  row(1, ""),
];
const INDENT = { 1: 22, 2: 34, 3: 47 };

const TreeItem = ({ item }) => item.table ? (
  <TreeRow $indent={9}>
    <Chev><ChevronDown size={9} /></Chev>
    <TableSlot>
      <TableIcon />
      {item.badge && <Badge><Check size={7} strokeWidth={3.500} /></Badge>}
    </TableSlot>
    {item.label}
  </TreeRow>
) : (
  <TreeRow $indent={INDENT[item.level]}>
    <Chev>{item.chev && <ChevronDown size={9} />}</Chev>
    <Box $on={item.on} $light={item.level > 1}>{item.on && <Check size={8} strokeWidth={3.500} />}</Box>
    <FieldIconSlot>{item.icon}</FieldIconSlot>
    {item.label}
  </TreeRow>
);

const FieldChip = ({ children }) => (
  <Field><span>{children}</span><ChevronDown size={9} /><X size={7} style={{ marginLeft: 6 }} /></Field>
);

export default function App() {
  return (
    <Root>
      <Global />
      <Ribbon />
      <Body>
        <CanvasCol>
          <CanvasArea>
            <Page>
              <CountryChart />
              <TypeBarChart />
              <TypeColChart />
              <RoastChart />
              <LineChart />
              <VisualTools>
                <ListFilter size={11} />
                <SquareArrowOutUpRight size={11} />
                <Ellipsis size={11} />
              </VisualTools>
            </Page>
          </CanvasArea>
          <TabBar>
            <ViewBtn $w={29} $on><Monitor size={16} /></ViewBtn>
            <ViewBtn $w={42}><Smartphone size={16} /></ViewBtn>
            <Arrows><Tri $left /><Tri /></Arrows>
            <PageTab $w={61}>Page 1</PageTab>
            <PageTab $w={63} $on>Page 2</PageTab>
            <AddTab><Plus size={13} strokeWidth={3.500} /></AddTab>
          </TabBar>
        </CanvasCol>
        <FiltersPanel>
          <PanelHead $l={5} $r={10}>
            <PanelTitle><ListFilter size={12} />Filters</PanelTitle>
            <HeadIcons><Eye size={9} /><ChevronsRight size={10} strokeWidth={2.500} /></HeadIcons>
          </PanelHead>
          <FilterSearch><Search size={11} />Search</FilterSearch>
          <Divider />
          <FilterSection $mt={7}>Filters on this visual<Ellipsis size={9} /></FilterSection>
          <FilterCard $mt={7}>Roast Type<br />is (All)</FilterCard>
          <FilterCard $mt={5}>Sum of Revenue<br />is (All)</FilterCard>
          <AddCard $mt={6} $h={37}>Add data fields here</AddCard>
          <FilterSection $mt={19}>Filters on this page<Ellipsis size={9} /></FilterSection>
          <AddCard $mt={8} $h={36}>Add data fields here</AddCard>
          <FilterSection $mt={21}>Filters on all pages<Ellipsis size={9} /></FilterSection>
          <AddCard $mt={7} $h={36}>Add data fields here</AddCard>
        </FiltersPanel>
        <VizPanel>
          <PanelHead $l={5} $r={7}>
            <PanelTitle>Visualizations</PanelTitle>
            <ChevronsRight size={10} strokeWidth={2.500} />
          </PanelHead>
          <BuildLabel>Build visual</BuildLabel>
          <VizTabs>
            <VizTab $on>
              <svg width="22" height="20" viewBox="0 0 22 20"><rect x="2" y="3" width="18" height="5" fill={GREEN} /><rect x="2" y="11" width="18" height="6" fill={GREEN} /><path d="M2 1h10M2 19h18M2 9.500h18" stroke={GREEN} strokeDasharray="1 1" /></svg>
            </VizTab>
            <VizTab>
              <svg width="22" height="20" viewBox="0 0 22 20" fill="none" stroke="#777"><path d="M4 19v-9h4V3h5v8M8 10v9M13 11v4" /><path d="M19 5l2 2-9 10-3 1 1-3z" fill="#fff" /></svg>
            </VizTab>
            <VizTab>
              <svg width="22" height="20" viewBox="0 0 22 20" fill="none" stroke="#777"><circle cx="9" cy="9" r="7.500" /><path d="M14 14l6 5" strokeWidth="2" /><path d="M3 11l3-4 3 2 5-4" /><path d="M6 12v3M9 11v5M12 10v5" /></svg>
            </VizTab>
          </VizTabs>
          <VizGrid>
            {vizIcons.map((ic, i) => (
              <VizCell key={i} $on={i === 17}>
                {i === 44 ? ic : <svg width="16" height="16" viewBox="0 0 16 16">{ic}</svg>}
              </VizCell>
            ))}
          </VizGrid>
          <WellsBox>
            <WellLabel $mt={7}>Legend</WellLabel>
            <Well $mt={5} $h={26}><FieldChip>Roast Type</FieldChip></Well>
            <WellLabel $mt={9}>Values</WellLabel>
            <Well $mt={5} $h={26}><FieldChip>Sum of Revenue</FieldChip></Well>
            <WellLabel $mt={10}>Details</WellLabel>
            <Well $mt={3} $h={22} $add>Add data fields here</Well>
            <WellLabel $mt={8}>Tooltips</WellLabel>
            <Well $mt={4} $h={22} $add>Add data fields here</Well>
            <WellLabel $mt={10} $bold>Drill through</WellLabel>
          </WellsBox>
          <ScrollBar $l={139} $t={344} $w={4} $h={162} $c="#666" />
        </VizPanel>
        <DataPanel>
          <PanelHead $l={5} $r={7}>
            <PanelTitle>Data</PanelTitle>
            <ChevronsRight size={10} strokeWidth={2.500} />
          </PanelHead>
          <DataSearch><Search size={13} />Search</DataSearch>
          {TREE.map((t, i) => <TreeItem key={i} item={t} />)}
          <ScrollBar $l={135} $t={133} $w={6} $h={370} $c="#8c8c8c" />
        </DataPanel>
      </Body>
      <Status>
        <span>of 2</span>
        <ZoomTools>
          <Minus size={9} />
          <Slider>
            <Thumb $l={25} $w={3} $h={8} $c="#333" />
            <Thumb $l={36} $w={1} $h={4} $c="#777" />
          </Slider>
          <Plus size={10} strokeWidth={2.500} />
          <ZoomValue>73%</ZoomValue>
          <FitIcon />
        </ZoomTools>
      </Status>
    </Root>
  );
}
